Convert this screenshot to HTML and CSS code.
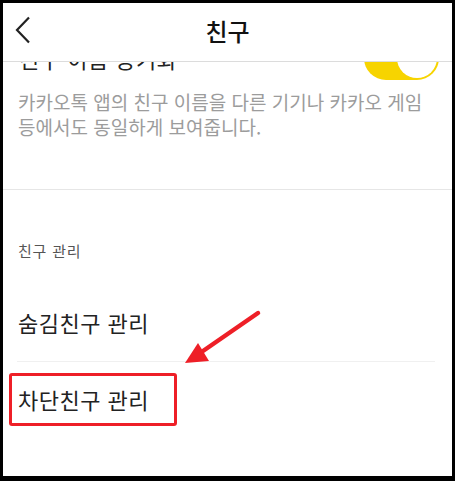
FILE: index.html
```html
<!DOCTYPE html>
<html lang="ko">
<head>
<meta charset="utf-8">
<title>친구</title>
<link rel="stylesheet" href="styles.css">
</head>
<body>
<div class="frame">
  <header class="header">
    <svg class="back" width="18" height="28" viewBox="0 0 18 28"><path d="M15 1.5 L3 14 L15 26.5" fill="none" stroke="#222" stroke-width="2.2"/></svg>
    <h1 class="title">친구</h1>
  </header>
  <main class="scroll">
    <div class="sync-row">
      <span class="sync-label">친구 이름 동기화</span>
      <span class="toggle"><span class="knob"></span></span>
    </div>
    <p class="desc">카카오톡 앱의 친구 이름을 다른 기기나 카카오 게임<br>등에서도 동일하게 보여줍니다.</p>
    <div class="section">
      <div class="section-label">친구 관리</div>
      <ul class="list">
        <li class="item">숨김친구 관리</li>
        <li class="item">차단친구 관리</li>
      </ul>
    </div>
  </main>
  <div class="highlight"></div>
  <svg class="arrow" width="449" height="473" viewBox="0 0 449 473">
    <line x1="255" y1="310" x2="200" y2="348" stroke="#ee1f27" stroke-width="4.5" stroke-linecap="round"/>
    <polygon points="182,360 195,340 206,358" fill="#ee1f27"/>
  </svg>
</div>
</body>
</html>
```
FILE: styles.css
```css
* { box-sizing: border-box; margin: 0; padding: 0; }
body { margin: 0; background: #fff; font-family: "Noto Sans CJK KR", "Noto Sans", sans-serif; }
.frame {
  position: relative;
  width: 455px;
  height: 481px;
  border: 3px solid #000;
  border-bottom-width: 5px;
  background: #fff;
  overflow: hidden;
  display: flex;
  flex-direction: column;
}
.header {
  position: relative;
  flex: 0 0 59px;
  height: 59px;
  border-bottom: 1px solid #dcdcdc;
  display: flex;
  align-items: center;
  justify-content: center;
  background: #fff;
}
.back { position: absolute; left: 11px; top: 13px; }
.title { font-size: 24px; font-weight: 500; color: #111; line-height: 1; margin-top: -2px; }
.scroll { flex: 1; overflow: hidden; }
.sync-row {
  margin-top: -35px;
  height: 62px;
  display: flex;
  align-items: center;
  justify-content: space-between;
  padding: 0 13px 0 16px;
}
.sync-label { font-size: 22px; color: #222; letter-spacing: 0.5px; }
.toggle {
  position: relative;
  width: 75px;
  height: 44px;
  border-radius: 22px;
  background: #f7d400;
}
.knob {
  position: absolute;
  right: 2px;
  top: 2px;
  width: 40px;
  height: 40px;
  border-radius: 50%;
  background: #fff;
}
.desc {
  font-size: 19px;
  line-height: 25px;
  color: #9c9c9c;
  padding: 0 0 50px 15px;
  border-bottom: 1px solid #e6e6e6;
}
.section { padding-top: 51px; }
.section-label { font-size: 15px; line-height: 20px; color: #555; padding-left: 15px; letter-spacing: 0.8px; }
.list { list-style: none; margin: 22px 17px 0 14px; }
.item {
  height: 78px;
  display: flex;
  align-items: center;
  padding-left: 1px;
  font-size: 22px;
  letter-spacing: 0.5px;
  color: #222;
}
.item + .item { border-top: 1px solid #f0f0f0; padding-bottom: 4px; }
.highlight {
  position: absolute;
  left: 6px;
  top: 370px;
  width: 168px;
  height: 53px;
  border: 3px solid #ee1f27;
  border-radius: 3px;
}
.arrow { position: absolute; left: 0; top: 0; }
```
